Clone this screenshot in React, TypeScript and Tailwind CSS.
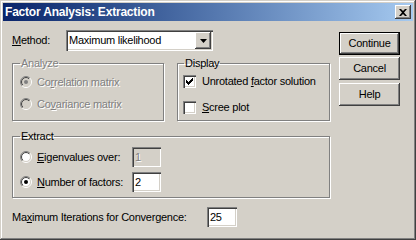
import React from "react";

const raised =
  "shadow-[inset_-1px_-1px_#404040,inset_1px_1px_#ffffff,inset_-2px_-2px_#808080,inset_2px_2px_#d4d0c8]";
const sunken =
  "shadow-[inset_1px_1px_#808080,inset_2px_2px_#404040,inset_-1px_-1px_#ffffff,inset_-2px_-2px_#d4d0c8]";
const etched = "border border-[#808080] shadow-[inset_1px_1px_#ffffff,1px_1px_#ffffff]";
const dim = "text-[#808080] [text-shadow:1px_1px_0_#ffffff]";

function Radio({ checked, disabled }: { checked?: boolean; disabled?: boolean }) {
  return (
    <svg width="12" height="12" viewBox="0 0 12 12" className="shrink-0">
      <defs>
        <linearGradient id="radio-out" x1="0" y1="0" x2="1" y2="1">
          <stop offset="0.5" stopColor="#808080" />
          <stop offset="0.5" stopColor="#ffffff" />
        </linearGradient>
        <linearGradient id="radio-in" x1="0" y1="0" x2="1" y2="1">
          <stop offset="0.5" stopColor="#404040" />
          <stop offset="0.5" stopColor="#d4d0c8" />
        </linearGradient>
      </defs>
      <circle cx="6" cy="6" r="5.5" fill="none" stroke="url(#radio-out)" />
      <circle cx="6" cy="6" r="4.5" fill={disabled ? "#d4d0c8" : "#ffffff"} stroke="url(#radio-in)" />
      {checked && <circle cx="6" cy="6" r="2" fill={disabled ? "#808080" : "#000000"} />}
    </svg>
  );
}

function Check({ checked }: { checked?: boolean }) {
  // classic 7x7 tick
  const px = [
    [6, 0], [5, 1], [6, 1], [0, 2], [4, 2], [5, 2], [6, 2],
    [0, 3], [1, 3], [3, 3], [4, 3], [5, 3], [0, 4], [1, 4], [2, 4], [3, 4], [4, 4],
    [1, 5], [2, 5], [3, 5], [2, 6],
  ];
  return (
    <div className={`w-[13px] h-[13px] bg-white shrink-0 flex items-center justify-center ${sunken}`}>
      {checked && (
        <svg width="7" height="7" viewBox="0 0 7 7">
          {px.map(([x, y]) => (
            <rect key={`${x}-${y}`} x={x} y={y} width="1" height="1" fill="#000" />
          ))}
        </svg>
      )}
    </div>
  );
}

function Btn({ label, def }: { label: string; def?: boolean }) {
  return (
    <div
      className={`w-[61px] h-[23px] flex items-center justify-center bg-[#d4d0c8] ${raised} ${
        def ? "border border-black" : ""
      }`}
    >
      {label}
    </div>
  );
}

export default function App() {
  return (
    <div className="w-[416px] h-[240px] p-[3px] bg-[#d4d0c8] flex flex-col text-[11px] leading-[13px] tracking-[-0.25px] text-black font-['Liberation_Sans',Arial,sans-serif] shadow-[inset_-1px_-1px_#404040,inset_1px_1px_#d4d0c8,inset_-2px_-2px_#808080,inset_2px_2px_#ffffff]">
      {/* title bar */}
      <div className="h-[18px] flex items-center justify-between pl-[2px] pr-[2px] bg-linear-to-r from-[#0a246a] to-[#a6caf0]">
        <span className="text-white font-bold text-[12px] tracking-[-0.2px]">Factor Analysis: Extraction</span>
        <div className={`w-[16px] h-[14px] bg-[#d4d0c8] flex items-center justify-center ${raised}`}>
          <svg width="8" height="7" viewBox="0 0 8 7">
            <path d="M0 0h2l2 2 2-2h2L5 3.5 8 7H6L4 5 2 7H0l3-3.5z" fill="#000" />
          </svg>
        </div>
      </div>

      <div className="flex pl-[9px] pt-[9px]">
        <div className="w-[318px] flex flex-col">
          {/* method */}
          <div className="flex items-center h-[21px]">
            <span className="w-[54px]">
              <span className="underline">M</span>ethod:
            </span>
            <div className={`w-[147px] h-[21px] bg-white flex items-center pl-[3px] pr-[2px] ${sunken}`}>
              <span className="flex-1">Maximum likelihood</span>
              <div className={`w-[16px] h-[17px] bg-[#d4d0c8] flex items-center justify-center ${raised}`}>
                <svg width="7" height="4" viewBox="0 0 7 4">
                  <path d="M0 0h7L3.5 4z" fill="#000" />
                </svg>
              </div>
            </div>
          </div>

          {/* analyze / display */}
          <div className="flex gap-[13px] mt-[6px]">
            <fieldset className={`w-[152px] h-[64px] px-[7px] ${etched}`}>
              <legend className={`px-[1px] ${dim}`}>Analyze</legend>
              <div className={`flex items-center gap-[5px] h-[16px] mt-[4px] ${dim}`}>
                <Radio checked disabled />
                <span>
                  Co<span className="underline">r</span>relation matrix
                </span>
              </div>
              <div className={`flex items-center gap-[5px] h-[16px] mt-[6px] ${dim}`}>
                <Radio disabled />
                <span>
                  Co<span className="underline">v</span>ariance matrix
                </span>
              </div>
            </fieldset>
            <fieldset className={`w-[153px] h-[64px] pl-[5px] ${etched}`}>
              <legend className="ml-[1px] px-[1px]">Display</legend>
              <div className="flex items-center gap-[6px] h-[16px] mt-[3px]">
                <Check checked />
                <span>
                  Unrotated <span className="underline">f</span>actor solution
                </span>
              </div>
              <div className="flex items-center gap-[6px] h-[16px] mt-[10px]">
                <Check />
                <span>
                  <span className="underline">S</span>cree plot
                </span>
              </div>
            </fieldset>
          </div>

          {/* extract */}
          <fieldset className={`w-[318px] h-[68px] px-[7px] mt-[9px] ${etched}`}>
            <legend className="px-[1px]">Extract</legend>
            <div className="flex items-center h-[20px] mt-[4px]">
              <div className="w-[112px] flex items-center gap-[5px]">
                <Radio />
                <span>
                  <span className="underline">E</span>igenvalues over:
                </span>
              </div>
              <div className={`w-[29px] h-[20px] bg-[#d4d0c8] flex items-center pl-[3px] ${sunken} ${dim}`}>1</div>
            </div>
            <div className="flex items-center h-[20px] mt-[5px]">
              <div className="w-[112px] flex items-center gap-[5px]">
                <Radio checked />
                <span>
                  <span className="underline">N</span>umber of factors:
                </span>
              </div>
              <div className={`w-[29px] h-[20px] bg-white flex items-center pl-[3px] ${sunken}`}>2</div>
            </div>
          </fieldset>

          {/* iterations */}
          <div className="flex items-center h-[20px] mt-[9px]">
            <span className="w-[195px]">
              Ma<span className="underline">x</span>imum Iterations for Convergence:
            </span>
            <div className={`w-[30px] h-[20px] bg-white flex items-center pl-[3px] ${sunken}`}>25</div>
          </div>
        </div>

        {/* buttons */}
        <div className="ml-[9px] pt-[2px] flex flex-col">
          <Btn label="Continue" def />
          <div className="mt-[2px]">
            <Btn label="Cancel" />
          </div>
          <div className="mt-[3px]">
            <Btn label="Help" />
          </div>
        </div>
      </div>
    </div>
  );
}
